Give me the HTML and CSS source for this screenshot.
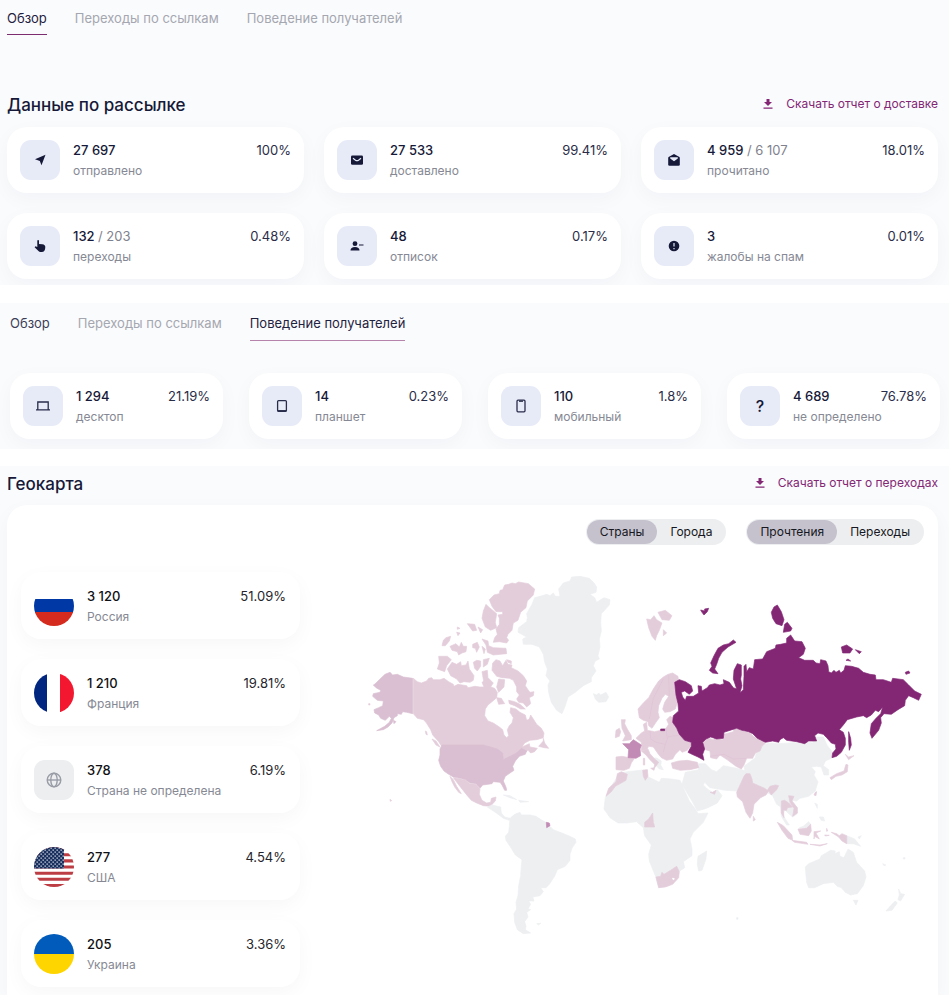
FILE: index.html
```html
<!DOCTYPE html>
<html lang="ru">
<head>
<meta charset="utf-8">
<meta name="viewport" content="width=device-width, initial-scale=1">
<title>Отчет по рассылке</title>
<link rel="stylesheet" href="styles.css">
</head>
<body>
<section class="block block-overview">
  <nav class="tabs">
    <a href="#overview" class="tab tab-active">Обзор</a>
    <a href="#links" class="tab">Переходы по ссылкам</a>
    <a href="#behavior" class="tab">Поведение получателей</a>
  </nav>
  <header class="head">
    <h2 class="title">Данные по рассылке</h2>
    <a href="#delivery" class="download"><svg class="dl-icon" viewBox="0 0 10 10"><path d="M3.500 0h3v3H9L5 7 1 3h2.500zM.5 8.500h9v1.200h-9z"/></svg>Скачать отчет о доставке</a>
  </header>
  <div class="cards cards-three">
    <article class="card"><span class="tile"><svg class="icon" viewBox="0 0 14 14"><path d="M12.500 1.800 8.500 12.300 6.800 8 2 6.200z" /></svg></span><div class="info"><p class="value">27 697</p><p class="label">отправлено</p></div><span class="pct">100%</span></article>
    <article class="card"><span class="tile"><svg class="icon" viewBox="0 0 14 14"><rect x="1" y="2.500" width="12" height="9.200" rx="1.300"/><path class="cut" d="M3 5.200 5.500 7.200q1.500 1 3 0L11 5.200"/></svg></span><div class="info"><p class="value">27 533</p><p class="label">доставлено</p></div><span class="pct">99.41%</span></article>
    <article class="card"><span class="tile"><svg class="icon" viewBox="0 0 14 14"><path d="M1.200 5Q1.200 4.300 2 3.800L7 1l5 2.800q.8.500.8 1.200v6.500q0 1.300-1.300 1.300h-9q-1.300 0-1.300-1.300z"/><path class="cut-fill" d="M3.200 4.300h7.600v1.300L7 8.200 3.200 5.600z"/></svg></span><div class="info"><p class="value">4 959 <span class="of">/ 6 107</span></p><p class="label">прочитано</p></div><span class="pct">18.01%</span></article>
    <article class="card"><span class="tile"><svg class="icon" viewBox="0 0 14 14"><path d="M4.300 1.800q0-.9.800-.9t.9.900V5l3.300.3q3 .4 3 2.700 0 5-3.600 5H7.300q-1 0-1.600-.8L1.600 8.200l.9-.9 1.800.8z"/></svg></span><div class="info"><p class="value">132 <span class="of">/ 203</span></p><p class="label">переходы</p></div><span class="pct">0.48%</span></article>
    <article class="card"><span class="tile"><svg class="icon" viewBox="0 0 14 14"><circle cx="5" cy="4.700" r="2.400"/><path d="M.5 11.500Q.5 8 5 8t4.500 3.500zM9 5.600h4.500v1H9z"/></svg></span><div class="info"><p class="value">48</p><p class="label">отписок</p></div><span class="pct">0.17%</span></article>
    <article class="card"><span class="tile"><svg class="icon" viewBox="0 0 14 14"><circle cx="7" cy="7" r="5.300"/><path class="cut" d="M7 4v3.600M7 9v1.200"/></svg></span><div class="info"><p class="value">3</p><p class="label">жалобы на спам</p></div><span class="pct">0.01%</span></article>
  </div>
</section>

<section class="block block-behavior">
  <nav class="tabs">
    <a href="#overview" class="tab tab-dark">Обзор</a>
    <a href="#links" class="tab">Переходы по ссылкам</a>
    <a href="#behavior" class="tab tab-active tab-soft">Поведение получателей</a>
  </nav>
  <div class="cards cards-four">
    <article class="card"><span class="tile"><svg class="icon line" viewBox="0 0 14 14"><path d="M1.800 10.500V3h10.400v7.500M0 10.800h14"/></svg></span><div class="info"><p class="value">1 294</p><p class="label">десктоп</p></div><span class="pct">21.19%</span></article>
    <article class="card"><span class="tile"><svg class="icon line" viewBox="0 0 14 14"><rect x="2.600" y="1.600" width="8.800" height="10.800" rx="1"/><path d="M3 11.700h8"/></svg></span><div class="info"><p class="value">14</p><p class="label">планшет</p></div><span class="pct">0.23%</span></article>
    <article class="card"><span class="tile"><svg class="icon line" viewBox="0 0 14 14"><rect x="3" y="1.200" width="8" height="11.600" rx="1"/><path d="M5 2.200h4"/></svg></span><div class="info"><p class="value">110</p><p class="label">мобильный</p></div><span class="pct">1.8%</span></article>
    <article class="card"><span class="tile question">?</span><div class="info"><p class="value">4 689</p><p class="label">не определено</p></div><span class="pct">76.78%</span></article>
  </div>
</section>

<section class="block block-geo">
  <header class="head">
    <h2 class="title">Геокарта</h2>
    <a href="#clicks" class="download"><svg class="dl-icon" viewBox="0 0 10 10"><path d="M3.500 0h3v3H9L5 7 1 3h2.500zM.5 8.500h9v1.200h-9z"/></svg>Скачать отчет о переходах</a>
  </header>
  <div class="panel">
    <div class="filters">
      <div class="switch"><button type="button" class="option option-on">Страны</button><button type="button" class="option">Города</button></div>
      <div class="switch"><button type="button" class="option option-on">Прочтения</button><button type="button" class="option">Переходы</button></div>
    </div>
    <div class="geo">
      <div class="countries">
        <article class="card country"><svg class="flag" viewBox="0 0 40 40"><path fill="#fff" d="M0 0h40v13H0z"/><path fill="#0039a6" d="M0 13h40v14H0z"/><path fill="#d52b1e" d="M0 26h40v14H0z"/></svg><div class="info"><p class="value">3 120</p><p class="label">Россия</p></div><span class="pct">51.09%</span></article>
        <article class="card country"><svg class="flag" viewBox="0 0 40 40"><path fill="#fff" d="M0 0h40v40H0z"/><path fill="#00267f" d="M0 0h13v40H0z"/><path fill="#f31830" d="M26 0h14v40H26z"/></svg><div class="info"><p class="value">1 210</p><p class="label">Франция</p></div><span class="pct">19.81%</span></article>
        <article class="card country"><span class="tile tile-gray"><svg class="globe" viewBox="0 0 16 16"><circle cx="8" cy="8" r="6.800"/><ellipse cx="8" cy="8" rx="3.200" ry="6.800"/><path d="M1 8h14"/></svg></span><div class="info"><p class="value">378</p><p class="label">Страна не определена</p></div><span class="pct">6.19%</span></article>
        <article class="card country"><svg class="flag" viewBox="0 0 40 40"><defs><pattern id="stars" width="4" height="4" patternUnits="userSpaceOnUse"><path fill="#dfe3ee" d="M.5.400h1.300v1.300H.5zM2.500 2.400h1.300v1.300H2.500z"/></pattern></defs><path fill="#fff" d="M0 0h40v40H0z"/><path stroke="#bd3d44" stroke-width="3.080" d="M0 1.500h40M0 7.700h40M0 13.900h40M0 20h40M0 26.200h40M0 32.300h40M0 38.500h40"/><path fill="#192f5d" d="M0 0h30v21.500H0z"/><path fill="url(#stars)" d="M0 0h30v21.500H0z"/></svg><div class="info"><p class="value">277</p><p class="label">США</p></div><span class="pct">4.54%</span></article>
        <article class="card country"><svg class="flag" viewBox="0 0 40 40"><path fill="#005bbb" d="M0 0h40v20H0z"/><path fill="#ffd500" d="M0 20h40v20H0z"/></svg><div class="info"><p class="value">205</p><p class="label">Украина</p></div><span class="pct">3.36%</span></article>
      </div>
      <svg class="map" viewBox="320 573 604 370" role="img" aria-label="Карта прочтений по странам">
        <!-- Greenland, Iceland, Svalbard -->
        <g transform="translate(500 560) scale(.3333)">
          <path class="none" d="M176 90 190 72 210 66 215 54 240 52 268 58 282 72 290 84 288 100 270 106 284 116 290 130 312 116 330 122 328 138 304 164 302 190 304 216 298 240 300 264 294 290 298 300 286 306 280 320 288 336 274 356 274 368 250 380 226 400 204 414 196 440 186 464 170 454 154 430 146 400 144 378 150 366 138 350 142 330 134 310 130 286 118 264 96 256 70 256 68 240 80 234 54 220 56 206 80 188 82 176 80 164 96 136 104 116 120 112 140 106 150 110 160 102 166 112 180 112z"/>
          <path class="none" d="M280 404 290 408 296 402 302 408 318 400 326 414 318 428 296 430 286 420z"/>
          <path class="low" d="M440 180 452 182 462 170 470 182 486 192 478 214 470 230 466 244 456 232 446 206zM474 160 496 154 516 170 508 184 486 182zM490 212 500 222 490 230z"/>
          <path class="top" d="M602 153 614 156 614 150 626 148 622 158 612 168 606 160z"/>
        </g>
        <!-- Arctic Canada -->
        <g class="low" transform="translate(360 560) scale(.3333)">
          <path d="M428 92 434 78 446 76 456 72 466 74 476 69 505 74 524 90 520 108 502 126 498 146 482 160 474 184 460 192 456 214 444 226 440 236 446 244 440 252 418 248 400 250 404 236 412 226 408 210 418 196 418 178 414 168 428 166 428 158 408 158 396 142 388 122 402 108 418 104 420 94z"/>
          <path d="M378 136 386 144 396 152 410 164 406 190 410 206 392 214 376 204 366 178 370 156z"/>
          <path d="M322 194 344 196 350 214 338 216zM354 204 368 212 362 222zM292 204 300 208 292 211zM290 220 300 222 294 230zM246 260 250 244 258 236 272 232 268 246 256 260zM270 262 288 254 298 264 304 250 310 262 320 262 318 278 306 282 296 288 292 278 276 274zM338 256 352 250 358 264 350 280 346 268 338 266zM366 240 384 246 386 260 400 266 438 268 440 284 400 288 382 280 378 258zM366 262 376 270 372 284z"/>
          <path d="M236 292 262 292 274 302 260 320 254 338 232 330 238 312zM262 330 276 310 290 316 302 308 304 320 318 318 324 306 328 330 342 350 340 364 330 370 312 368 300 372 290 360 272 350z"/>
          <path d="M340 310 350 304 362 306 362 322 352 336 344 328zM370 302 388 298 382 316 370 324zM366 338 382 334 384 356 400 372 392 384 372 372zM398 312 408 302 420 306 428 320 438 304 444 316 456 318 454 326 474 336 490 350 500 366 496 380 504 392 510 400 522 398 520 410 508 416 512 434 500 444 490 432 476 430 470 420 478 408 470 398 470 384 460 364 448 358 426 356 410 352 396 334zM440 302 454 306 454 314 444 310zM416 360 434 362 432 384 416 400 410 384zM410 416 424 418 434 434 416 436zM446 424 464 428 480 436 496 450 482 450 464 440 448 434z"/>
        </g>
        <!-- North America -->
        <g transform="translate(360 660) scale(.3333)">
          <path class="low" d="M160 58 172 68 184 72 200 66 206 58 215 56 220 62 240 62 252 58 266 68 280 76 282 82 294 76 320 80 324 86 345 82 360 84 372 84 366 70 376 64 386 74 392 84 404 88 412 100 410 116 396 128 384 138 376 150 374 170 384 186 400 192 418 204 428 212 432 228 440 236 446 230 442 212 448 200 456 192 460 176 450 160 452 146 468 150 480 160 496 168 500 184 508 180 512 168 520 180 530 196 544 208 552 222 550 236 530 242 510 244 494 252 486 264 508 254 510 264 532 268 524 278 512 282 504 274 490 282 470 290 450 300 430 304 424 285 410 270 392 266 370 262H245L236 248 218 228 212 212 198 190 190 182 172 178 160 164z"/>
          <path class="low" d="M536 262 550 246 550 238 554 252 566 268 552 266zM216 240 228 246 240 264 228 258zM196 216 200 218 202 228 198 226z"/>
          <path class="mid" d="M45 75 58 62 75 46 90 40 98 48 112 46 130 54 158 58V164L140 160 128 158 124 166 112 164 112 170 102 176 96 192 84 204 70 212 50 215 74 202 88 190 94 178 88 172 76 184 62 178 56 168 44 162 42 152 56 146 68 140 70 126 52 124 38 112 40 104 60 100 62 94 48 86 40 78zM100 184 108 188 102 194z"/>
          <path class="mid" d="M246 258H370L392 264 412 270 428 282 430 302 450 292 470 282 484 268 500 276 496 286 478 292 466 306 458 322 462 334 450 342 436 352 430 366 438 384 440 394 434 394 426 378 420 370 400 368 396 374 384 376 368 378 360 388 348 374 330 372 316 362 300 358 280 354 266 346 252 336 242 322 236 304 240 288 240 270z"/>
          <path class="low" d="M280 356 300 359 316 363 330 374 348 376 360 390 358 406 366 424 380 432 392 430 394 418 408 414 406 426 398 434 392 442 370 440 350 432 334 424 322 410 306 390 292 372zM270 352 280 362 290 382 304 404 296 400 284 384 276 368z"/>
          <path class="low" d="M26 134h4v4h-4zM90 421l5 4-4 2z"/>
        </g>
        <!-- Central and South America -->
        <g class="none" transform="translate(460 780) scale(.3333)">
          <path d="M82 84 96 78 122 84 124 102 134 114 150 118 148 124 130 118 112 104zM130 48 150 50 170 62 150 56zM176 64 206 68 180 70zM230 434 242 433 236 438z"/>
          <path d="M150 118 164 106 180 100 184 108 210 108 228 112 246 124 258 130 272 144 280 152 300 160 326 170 346 180 348 190 336 208 330 226 330 244 316 262 292 272 284 292 268 316 258 326 242 326 250 338 240 350 218 354 222 366 206 366 212 376 204 390 212 392 200 400 204 414 194 428 198 442 196 452 212 462 190 464 172 452 164 430 162 404 170 390 168 370 174 350 176 320 182 290 184 260 186 242 166 228 154 208 138 184 136 172 146 160 148 142z"/>
          <path class="high" d="M259 130 268 132 270 140 260 146z"/>
        </g>
        <!-- Africa, Asia and Oceania -->
        <g class="none" transform="translate(590 740) scale(.3333)">
          <path d="M86 104 112 98 150 94 172 92 170 112 188 120 208 130 214 118 244 120 270 124 276 136 286 160 298 186 316 210 324 224 354 222 340 250 310 280 300 300 306 330 306 350 280 368 284 386 266 398 262 420 236 440 206 446 196 410 178 366 176 346 184 318 164 290 160 266 140 248 110 252 84 252 60 236 42 210 46 176 60 148 74 126zM324 352 350 336 348 360 336 394 326 396 322 376z"/>
          <path d="M276 136 286 100 326 92 326 74 346 74 364 92 380 98 400 80 440 88 468 96 478 110 460 118 450 138 440 156 406 154 384 150 360 146 344 130 340 138 352 150 368 160 382 152 396 170 382 192 350 208 322 216 306 186 290 160z"/>
          <path d="M466 100 462 82 496 56 498 44 522 16 545 12 560 14 600 12 636 8 670 12 664-6 700-6 712 20 728 40 724 58 706 66 700 80 716 92 716 108 702 108 694 84 680 82 664 84 676 98 672 108 684 128 676 156 656 172 630 178 620 186 604 184 622 206 622 224 608 234 594 222 584 212 580 230 598 258 590 258 574 232 572 204 560 196 548 170 530 160 490 136z"/>
          <path d="M180 62 198 56 214 66 212 78 220 92 208 90 194 76zM628 266 640 262 656 248 662 256 650 268zM674 192 682 196 682 208zM688 234 700 234 704 246 694 244zM770 290 794 300 812 322 790 314 770 314zM804 294 814 290 808 300z"/>
          <path d="M646 384 656 374 690 360 694 350 712 340 722 334 736 336 734 344 748 338 750 352 762 356 774 330 790 340 800 370 824 396 828 414 820 440 802 464 782 468 766 460 754 446 742 442 730 430 700 434 674 446 656 446 650 430 648 408zM790 484 804 484 798 498zM926 450 932 464 944 466 932 486 924 482 928 468zM888 516 904 498 916 486 922 492 906 514zM878 374 888 378 882 380zM940 356h5v4h-5zM440 536h4v5h-4z"/>
          <g class="low">
            <path d="M48 172 56 148 78 128 82 104 94 98 112 106 108 124 76 142 64 158zM158 94 172 92 174 112 166 124 160 112zM164 250 176 240 188 222 190 250 194 264 164 264zM198 414 212 412 216 400 222 406 242 394 260 382 268 398 266 416 248 436 226 444 206 446zM360 160 368 160 378 154 374 166z"/>
            <path d="M462 112 468 104 480 104 486 120 488 132 506 140 524 148 532 154 540 142 556 138 566 140 560 152 544 168 536 156 528 168 512 176 492 196 488 222 480 238 468 220 458 188 442 174 440 160 450 138zM490 232 496 242 490 246z"/>
            <path d="M574 186 584 184 596 192 608 204 592 206 590 214 580 214 582 236 574 222zM596 170 612 172 606 186 622 206 622 222 608 232 610 222 612 208 600 190zM562 250 580 260 606 288 608 304 594 298 576 274zM606 304 650 310 654 316 614 310zM624 270 650 268 662 256 664 276 656 290 630 286zM672 278 692 276 678 282 688 300 674 292 672 300zM660 316 690 318 712 314 690 321zM710 268 713 276 710 277zM704 288 718 289 706 291zM724 280 740 284 748 290 756 284 770 290 770 314 756 306 746 294z"/>
            <path d="M720 116 740 104 762 96 768 76 774 78 772 98 756 108 738 112 724 122zM766 46 776 54 792 50 776 62zM676 160 680 158 678 170 672 168z"/>
          </g>
          <path fill="#fff" stroke="none" d="M248 416 254 418 252 424 246 420z"/>
        </g>
        <!-- Europe and Central Asia -->
        <g class="low" transform="translate(600 660) scale(.3333)">
          <path d="M204 46 218 42 234 52 236 70 230 90 232 130 226 150 210 158 194 160 188 150 194 130 206 112 196 106 186 118 176 140 174 160 178 176 168 190 156 208 146 200 144 188 130 184 118 176 114 150 130 132 146 116 160 90 176 66 190 54z"/>
          <path d="M108 238 124 222 134 216 130 196 140 190 142 214 164 218 182 214 198 208 206 196 200 182 210 172 224 178 222 200 240 224 252 240 274 246 276 256 262 274 246 280 240 272 226 286 218 300 200 304 184 296 174 284 160 264 146 262 140 272 124 274 124 250zM64 182 76 182 74 194 82 210 94 230 94 242 68 246 76 230 66 208zM48 214 58 208 62 218 58 232 46 236z"/>
          <path d="M48 294 66 292 88 296 102 300 94 312 88 328 72 334 48 332zM124 276 144 270 150 284 164 300 176 310 166 324 162 328 164 316 148 300 138 288zM130 298 134 298 134 318 130 318zM152 328 164 326 162 334zM214 312 236 306 262 304 292 310 296 326 270 332 240 334 218 328z"/>
          <path d="M308 256 310 242 322 236 340 242 346 236 368 242 372 226 400 218 402 210 424 210 434 218 446 218 460 232 496 252 486 262 480 276 466 282 458 298 440 298 432 318 424 330 408 322 384 304 360 288 350 300 332 296 330 276 316 272z"/>
          <path class="high" d="M68 254 88 254 100 242 112 250 124 258 120 270 122 290 108 298 84 296 86 272z"/>
          <path class="top" d="M182 210 194 210 194 215 182 215z"/>
          <path class="border" d="M206 48 208 112M190 60 160 118 148 180M150 216 152 240 168 250 196 256M198 208 202 240 196 256 190 280M202 234 238 228M330 292 372 286 400 300 440 298"/>
        </g>
        <!-- Russia -->
        <g class="top" transform="translate(670 590) scale(.3333)">
          <path d="M118 244 126 232 122 222 132 200 144 178 160 168 176 164 190 153 198 160 174 174 156 190 146 208 140 226 134 240 144 254 128 252zM304 70 312 54 322 48 334 68 342 92 336 110 318 104 308 88zM340 130 344 106 352 100 366 118 362 126zM514 174 530 168 548 180 540 192 518 192zM556 182 574 188 568 194zM528 214 534 210 542 216zM706 250 716 246 720 252 708 256z"/>
          <path d="M14 280 28 272 46 278 64 290 68 306 58 316 44 306 34 310 38 324 46 334 50 322 70 322 86 312 84 290 94 292 96 306 112 296 118 288 134 284 150 288 162 284 160 272 178 280 190 296 200 300 190 270 192 244 202 224 214 228 214 258 212 270 216 290 210 312 220 302 222 262 222 232 228 226 230 248 238 236 250 240 254 212 278 210 290 188 316 178 318 168 332 166 350 162 350 148 362 138 374 156 396 158 406 178 400 196 386 206 404 214 430 214 438 222 450 224 452 212 468 216 474 230 476 248 484 252 492 244 498 250 508 244 512 252 522 244 526 230 545 232 566 238 580 250 600 256 616 258 618 272 640 272 664 280 668 268 700 272 716 288 734 306 754 316 746 334 730 326 716 320 706 334 704 350 684 362 664 376 642 374 632 386 634 402 626 424 606 448 600 432 604 404 618 388 632 374 638 354 626 368 616 364 604 378 590 386 580 380 560 384 532 392 520 408 508 422 520 430 526 448 526 468 514 490 500 502 486 506 488 492 498 480 496 466 484 462 470 446 460 436 444 432 434 440 440 456 416 456 404 464 380 458 350 454 340 446 330 452 326 460 308 456 286 460 262 448 248 434 236 428 216 424 200 418 186 422 162 430 160 448 140 450 122 444 108 450 98 460 104 480 98 496 102 514 84 504 66 496 54 490 64 472 64 460 44 454 28 436 20 418 8 400 10 380 26 366 24 344 18 318zM536 428 542 448 544 468 538 484 536 460z"/>
        </g>
      </svg>
    </div>
  </div>
</section>
</body>
</html>
```

FILE: styles.css
```css
* { box-sizing: border-box; }

body {
  margin: 0;
  background: #fff;
  color: #161938;
  font-family: Inter, "Noto Sans", sans-serif;
  font-size: 13px;
  line-height: 20px;
}

h2, p { margin: 0; }
a { color: inherit; text-decoration: none; }

.block { overflow: hidden; background: #fafbfd; }
.block-overview { padding: 8px 11px 6px 7px; }
.block-behavior { margin-top: 18px; padding: 10px 9px 10px 10px; }
.block-geo { margin-top: 17px; padding: 6px 11px 0 7px; }

.tabs { display: flex; gap: 28px; }
.tab { padding-bottom: 6px; border-bottom: 1px solid transparent; color: #a5a7b0; }
.tab-dark { color: #3d3f59; }
.tab-active { border-color: #7d2c70; color: #1f2240; }
.tab-soft { border-color: #b583ac; }
.block-behavior .tab { padding-bottom: 7px; }

.head { display: flex; align-items: flex-start; justify-content: space-between; }
.block-overview .head { margin-top: 58px; }
.title { font-size: 17px; font-weight: 500; line-height: 24px; }
.download { display: flex; align-items: center; gap: 13px; color: #832775; font-size: 12px; line-height: 22px; }
.dl-icon { width: 10px; height: 10px; fill: currentColor; }

.cards { display: grid; }
.cards-three { grid-template-columns: repeat(3, minmax(0, 1fr)); gap: 20px; margin-top: 10px; }
.cards-four { grid-template-columns: repeat(4, minmax(0, 1fr)); gap: 26px; margin-top: 32px; }

.card {
  display: flex;
  gap: 13px;
  padding: 13px;
  border-radius: 20px;
  background: #fff;
  box-shadow: 0 6px 20px rgba(20, 24, 50, .035);
}
.tile {
  display: flex;
  flex: none;
  align-items: center;
  justify-content: center;
  width: 40px;
  height: 40px;
  border-radius: 11px;
  background: #e7ebf8;
}
.tile-gray { background: #eceef0; }
.question { font-size: 16px; font-weight: 500; }
.icon { width: 14px; height: 14px; fill: #161938; }
.line { fill: none; stroke: #2a2d4a; stroke-width: 1.3; }
.cut { fill: none; stroke: #e7ebf8; stroke-width: 1.2; }
.cut-fill { fill: #e7ebf8; }
.globe { width: 16px; height: 16px; fill: none; stroke: #9a9ca6; stroke-width: 1.4; }

.info { flex: 1; min-width: 0; white-space: nowrap; }
.value { font-weight: 500; }
.of { color: #7f828e; font-weight: 400; }
.label { padding-top: 2px; color: #868994; font-size: 12px; line-height: 18px; }
.pct { color: #2a2d47; }

.panel {
  margin-top: 9px;
  padding: 14px 14px 8px;
  border-radius: 20px 20px 0 0;
  background: #fff;
  box-shadow: 0 6px 20px rgba(20, 24, 50, .035);
}
.filters { display: flex; justify-content: flex-end; gap: 20px; }
.switch { display: flex; padding: 1px; border-radius: 13px; background: #edeef0; }
.option {
  padding: 0 13px;
  border: 0;
  border-radius: 12px;
  background: none;
  color: #161720;
  font: inherit;
  font-size: 12px;
  line-height: 24px;
}
.option-on { background: #c5c2ce; }

.geo { display: grid; grid-template-columns: 279px 1fr; gap: 20px; align-items: start; margin-top: 27px; }
.countries { display: grid; gap: 20px; }
.country { padding: 14px 14px 13px 13px; color: #101114; }
.country .pct { color: #25262c; }
.flag { flex: none; width: 40px; height: 40px; border-radius: 50%; }

.map { display: block; width: 100%; height: auto; stroke-linejoin: round; stroke-width: 2; }
.none { fill: #edeff1; stroke: #edeff1; }
.low { fill: #e4cddb; stroke: #e4cddb; }
.mid { fill: #dabfd2; stroke: #dabfd2; }
.high { fill: #c28bb5; stroke: #c28bb5; }
.top { fill: #832775; stroke: #832775; }
.border { fill: none; stroke: #dec3d4; }
```
